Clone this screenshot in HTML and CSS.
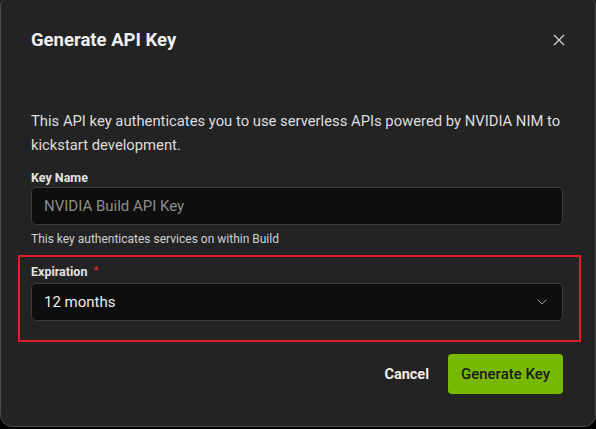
FILE: index.html
```html
<!DOCTYPE html>
<html>
<head>
<meta charset="utf-8">
<link rel="stylesheet" href="styles.css">
</head>
<body>
<div class="dialog">
  <div class="header">
    <h1 class="title">Generate API Key</h1>
    <button class="close" aria-label="Close">
      <svg width="12" height="12" viewBox="0 0 12 12"><path d="M1 1L11 11M11 1L1 11" stroke="#d0d0d0" stroke-width="1.3" fill="none"/></svg>
    </button>
  </div>
  <p class="desc">This API key authenticates you to use serverless APIs powered by NVIDIA NIM to kickstart development.</p>
  <div class="field">
    <label class="label">Key Name</label>
    <div class="input placeholder">NVIDIA Build API Key</div>
    <div class="helper">This key authenticates services on within Build</div>
  </div>
  <div class="highlight">
    <label class="label">Expiration <span class="req">*</span></label>
    <div class="input select">
      <span>12 months</span>
      <svg width="10" height="6" viewBox="0 0 10 6"><path d="M0.5 0.5L5 5L9.5 0.5" stroke="#9a9a9a" stroke-width="1" fill="none"/></svg>
    </div>
  </div>
  <div class="actions">
    <button class="cancel">Cancel</button>
    <button class="primary">Generate Key</button>
  </div>
</div>
</body>
</html>
```

FILE: styles.css
```css
html, body {
  margin: 0;
  padding: 0;
  background: #000;
  width: 596px;
  height: 429px;
  overflow: hidden;
}
body {
  font-family: "Roboto", "Liberation Sans", sans-serif;
}
.dialog {
  box-sizing: border-box;
  width: 596px;
  height: 434px;
  margin-top: -7px;
  background: #232323;
  border: 1px solid #4a4a4a;
  border-radius: 12px;
  padding: 34px 32px 0 30px;
  display: flex;
  flex-direction: column;
}
.header {
  display: flex;
  align-items: center;
  justify-content: space-between;
  height: 24px;
}
.title {
  margin: 0;
  font-size: 18.5px;
  font-weight: 700;
  color: #efefef;
}
.close {
  background: none;
  border: 0;
  padding: 0;
  margin-right: -2px;
  width: 12px;
  height: 12px;
  display: flex;
}
.desc {
  margin: 57px 0 0;
  font-size: 14.8px;
  line-height: 24px;
  color: #dedede;
}
.field {
  margin-top: 13px;
  display: flex;
  flex-direction: column;
}
.label {
  font-size: 12.5px;
  font-weight: 700;
  line-height: 16px;
  color: #e2e2e2;
  margin-bottom: 1px;
}
.highlight .label {
  margin-bottom: 3px;
}
.req {
  color: #e0262e;
  font-size: 11px;
  line-height: 0;
  margin-left: 3px;
  vertical-align: 2px;
}
.input {
  box-sizing: border-box;
  height: 38px;
  background: #0e0e0e;
  border: 1px solid #3a3a3a;
  border-radius: 5px;
  padding: 0 12px;
  display: flex;
  align-items: center;
  font-size: 15px;
  color: #e6e6e6;
}
.placeholder {
  color: #8c8c8c;
}
.helper {
  margin-top: 6px;
  font-size: 12px;
  line-height: 16px;
  color: #d0d0d0;
}
.highlight {
  margin: 8px -18px 0 -13px;
  border: 2px solid #e01e2a;
  padding: 7px 16px 19px 11px;
  display: flex;
  flex-direction: column;
}
.select {
  justify-content: space-between;
  padding-right: 15px;
  color: #ececec;
}
.actions {
  margin-top: 12px;
  display: flex;
  justify-content: flex-end;
  align-items: center;
  gap: 19px;
}
.cancel {
  background: none;
  border: 0;
  padding: 0;
  font-family: inherit;
  font-size: 14.5px;
  font-weight: 700;
  color: #ececec;
}
.primary {
  font-family: inherit;
  background: #76b900;
  border: 0;
  border-radius: 4px;
  height: 40px;
  width: 115px;
  font-size: 15px;
  font-weight: 500;
  color: #1b1b1b;
}
```
